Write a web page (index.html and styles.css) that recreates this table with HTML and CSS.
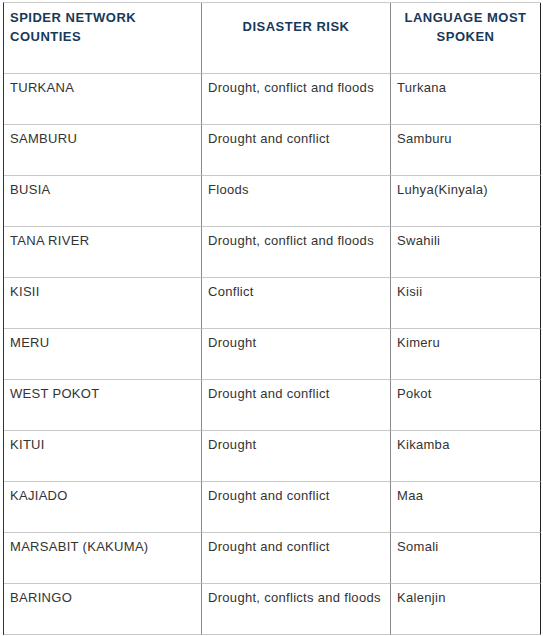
FILE: index.html
```html
<!DOCTYPE html>
<html lang="en">
<head>
<meta charset="utf-8">
<title>Spider Network Counties</title>
<link rel="stylesheet" href="styles.css">
</head>
<body>
<table class="risk-table">
  <thead>
    <tr>
      <th class="col-county">SPIDER NETWORK<br>COUNTIES</th>
      <th class="col-risk center offset">DISASTER RISK</th>
      <th class="col-lang center last">LANGUAGE MOST<br>SPOKEN</th>
    </tr>
  </thead>
  <tbody>
    <tr><td>TURKANA</td><td>Drought, conflict and floods</td><td class="last">Turkana</td></tr>
    <tr><td>SAMBURU</td><td>Drought and conflict</td><td class="last">Samburu</td></tr>
    <tr><td>BUSIA</td><td>Floods</td><td class="last">Luhya(Kinyala)</td></tr>
    <tr><td>TANA RIVER</td><td>Drought, conflict and floods</td><td class="last">Swahili</td></tr>
    <tr><td>KISII</td><td>Conflict</td><td class="last">Kisii</td></tr>
    <tr><td>MERU</td><td>Drought</td><td class="last">Kimeru</td></tr>
    <tr><td>WEST POKOT</td><td>Drought and conflict</td><td class="last">Pokot</td></tr>
    <tr><td>KITUI</td><td>Drought</td><td class="last">Kikamba</td></tr>
    <tr><td>KAJIADO</td><td>Drought and conflict</td><td class="last">Maa</td></tr>
    <tr><td>MARSABIT (KAKUMA)</td><td>Drought and conflict</td><td class="last">Somali</td></tr>
    <tr><td>BARINGO</td><td>Drought, conflicts and floods</td><td class="last">Kalenjin</td></tr>
  </tbody>
</table>
</body>
</html>
```
FILE: styles.css
```css
html, body {
  margin: 0;
  padding: 0;
  background: #ffffff;
}

.risk-table {
  margin: 2px 0 0 3px;
  width: 538px;
  table-layout: fixed;
  border-collapse: separate;
  border-spacing: 0;
  border-left: 1px solid #333333;
  border-top: 1px solid #cccccc;
  font-family: "Liberation Sans", Arial, Helvetica, sans-serif;
}

.risk-table th,
.risk-table td {
  box-sizing: border-box;
  vertical-align: top;
  text-align: left;
  border-right: 1px solid #8a8a8a;
  border-bottom: 1px solid #c8c8c8;
}

.risk-table th {
  height: 71px;
  padding: 5px 6px 4px;
  font-size: 13px;
  font-weight: bold;
  line-height: 19px;
  letter-spacing: 0.5px;
  color: #17395a;
}

.risk-table td {
  height: 51px;
  padding: 6px 6px 4px;
  font-size: 13px;
  line-height: 15px;
  letter-spacing: 0.3px;
  color: #333333;
}

.risk-table .col-county { width: 198px; }
.risk-table .col-risk { width: 189px; }
.risk-table .col-lang { width: 150px; }

.risk-table .center { text-align: center; }
.risk-table .offset { padding-top: 14px; }

.risk-table .last {
  border-right-color: #222222;
}
```
